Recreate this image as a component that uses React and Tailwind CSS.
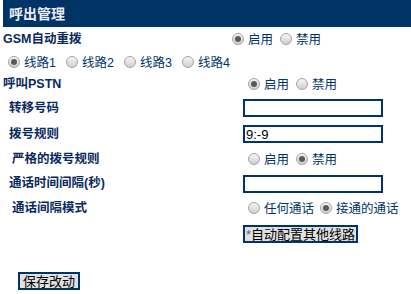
import React from "react";

const font = "font-['Liberation_Sans','Noto_Sans_CJK_SC',sans-serif]";

const Radio = ({ checked, label, width }) => (
	<label className={`flex items-center gap-[4px] ${width}`}>
		<span className="flex items-center justify-center w-[12px] h-[12px] rounded-full border border-[#a4a4a4] bg-linear-to-b from-[#f6f6f6] to-[#cfcfcf] shrink-0">
			{checked && <span className="w-[6px] h-[6px] rounded-full bg-[#5a5a5a]"></span>}
		</span>
		<span className="mt-[3px] text-[12.5px] leading-none text-[#003366] whitespace-nowrap">{label}</span>
	</label>
);

const Label = ({ children, indent = "pl-[9px]" }) => (
	<div className={`w-[243px] shrink-0 ${indent} text-[12.5px] font-bold leading-none text-[#0a2a5e] whitespace-nowrap`}>
		{children}
	</div>
);

const TextBox = ({ value = "" }) => (
	<input
		readOnly
		value={value}
		className="w-[140px] h-[18px] border-2 border-[#003366] bg-white px-[1px] text-[13px] leading-none text-black outline-none"
	/>
);

export default function App() {
	return (
		<div className={`w-[411px] h-[294px] bg-white ${font}`}>
			{/* title bar */}
			<div className="ml-[3px] h-[27px] bg-[#003366] flex items-center pl-[6px]">
				<span className="text-[14px] font-bold leading-none text-[#ececf4]">呼出管理</span>
			</div>

			{/* GSM redial */}
			<div className="h-[24px] flex items-center">
				<div className="w-[232px] shrink-0 pl-[3px] text-[12.5px] font-bold leading-none text-[#0a2a5e]">GSM自动重拨</div>
				<Radio checked label="启用" width="w-[48px]" />
				<Radio label="禁用" width="w-[48px]" />
			</div>
			<div className="h-[22px] flex items-center pl-[8px]">
				<Radio checked label="线路1" width="w-[58px]" />
				<Radio label="线路2" width="w-[58px]" />
				<Radio label="线路3" width="w-[58px]" />
				<Radio label="线路4" width="w-[58px]" />
			</div>

			{/* PSTN */}
			<div className="h-[22px] flex items-center">
				<div className="w-[248px] shrink-0 pl-[3px] text-[12.5px] font-bold leading-none text-[#0a2a5e]">呼叫PSTN</div>
				<Radio checked label="启用" width="w-[48px]" />
				<Radio label="禁用" width="w-[48px]" />
			</div>
			<div className="h-[26px] flex items-center">
				<Label>转移号码</Label>
				<TextBox />
			</div>
			<div className="h-[26px] flex items-center">
				<Label>拨号规则</Label>
				<TextBox value="9:-9" />
			</div>
			<div className="h-[24px] flex items-center">
				<Label indent="pl-[12px]">严格的拨号规则</Label>
				<div className="flex items-center pl-[5px]">
					<Radio label="启用" width="w-[48px]" />
					<Radio checked label="禁用" width="w-[48px]" />
				</div>
			</div>
			<div className="h-[25px] flex items-center">
				<Label>通话时间间隔(秒)</Label>
				<TextBox />
			</div>
			<div className="h-[24px] flex items-center">
				<Label indent="pl-[12px]">通话间隔模式</Label>
				<div className="flex items-center pl-[5px]">
					<Radio label="任何通话" width="w-[72px]" />
					<Radio checked label="接通的通话" width="w-[76px]" />
				</div>
			</div>
			<div className="h-[28px] flex items-center pl-[243px]">
				<button className="w-[115px] h-[18px] border-2 border-[#003366] bg-[#e1e1e1] flex items-center justify-center text-[13px] leading-none text-black whitespace-nowrap">
					<span className="text-[#5a5a8a]">*</span>自动配置其他线路
				</button>
			</div>

			{/* save */}
			<div className="h-[19px]"></div>
			<div className="h-[28px] flex items-center pl-[18px]">
				<button className="w-[62px] h-[18px] border-2 border-[#003366] bg-[#e1e1e1] flex items-center justify-center text-[13px] leading-none text-black">
					保存改动
				</button>
			</div>
		</div>
	);
}
